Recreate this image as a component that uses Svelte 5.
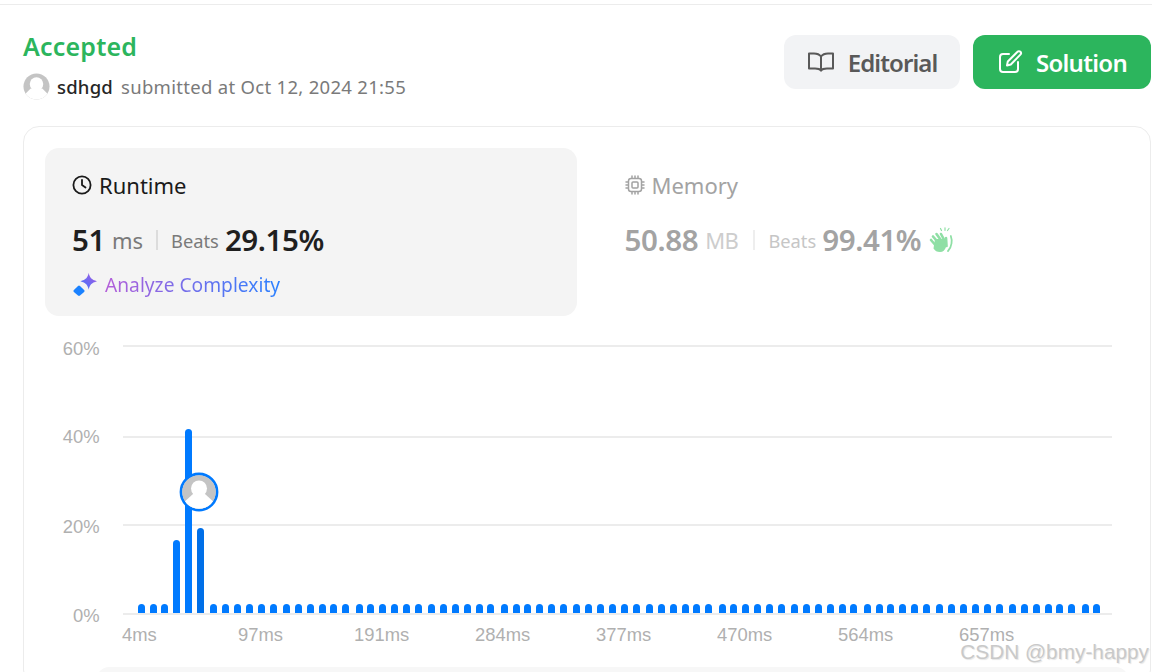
<script>
  const bars = Array.from({ length: 80 }, (_, i) => {
    const h = i === 3 ? 73 : i === 4 ? 184 : i === 5 ? 85 : 9;
    const x = 137.7 + 72.6 * Math.floor(i / 6) + 11.86 * (i % 6) - 45;
    return { x: x.toFixed(1), h, dark: i === 5 };
  });
  const grid = [
    { y: 346, ty: 355, label: '60%' },
    { y: 437, ty: 443, label: '40%' },
    { y: 525, ty: 533, label: '20%' },
    { y: 614, ty: 622, label: '0%' }
  ];
  const ticks = [
    { x: 122, label: '4ms' },
    { x: 238, label: '97ms' },
    { x: 354, label: '191ms' },
    { x: 475, label: '284ms' },
    { x: 596, label: '377ms' },
    { x: 717, label: '470ms' },
    { x: 838, label: '564ms' },
    { x: 959, label: '657ms' }
  ];
</script>

<div class="page">
  <header class="head">
    <div class="status">
      <h1>Accepted</h1>
      <div class="who">
        <svg class="avatar" viewBox="0 0 28 28" aria-hidden="true">
          <defs><clipPath id="av"><circle cx="14" cy="14" r="13.500" /></clipPath></defs>
          <circle cx="14" cy="14" r="13.500" fill="#c4c4c4" />
          <g clip-path="url(#av)" fill="#fff">
            <circle cx="14" cy="11.500" r="7" />
            <path d="M8 16h12l7 7v6H1v-6z" />
          </g>
        </svg>
        <span class="name">sdhgd</span>
        <span class="when">submitted at Oct 12, 2024 21:55</span>
      </div>
    </div>
    <div class="actions">
      <button class="btn gray">
        <svg viewBox="0 0 28 24" width="28" height="24" fill="none" stroke="currentColor" stroke-width="2" stroke-linejoin="round" stroke-linecap="round" aria-hidden="true">
          <path d="M14 6.500C12.500 4.500 10 3.500 7 3.500H2v15h6c3 0 5 .6 6 2 1-1.400 3-2 6-2h6v-15h-5c-3 0-5.500 1-7 3z" />
          <path d="M14 6.500v14" />
        </svg>
        Editorial
      </button>
      <button class="btn green">
        <svg viewBox="0 0 26 26" width="26" height="26" fill="none" stroke="currentColor" stroke-width="2" stroke-linejoin="round" stroke-linecap="round" aria-hidden="true">
          <path d="M12 5H6a3 3 0 0 0-3 3v12a3 3 0 0 0 3 3h12a3 3 0 0 0 3-3v-7" />
          <path d="M10 16.500l.8-4L20.500 2.800a2 2 0 0 1 2.900 0 2 2 0 0 1 0 2.800L13.800 15.500z" />
        </svg>
        Solution
      </button>
    </div>
  </header>

  <section class="card">
    <div class="stats">
      <div class="stat active">
        <div class="title">
          <svg viewBox="0 0 20 20" width="20" height="20" fill="none" stroke="#1a1a1a" stroke-width="1.800" stroke-linecap="round" stroke-linejoin="round" aria-hidden="true">
            <circle cx="10" cy="10" r="8.600" />
            <path d="M10 4.800V10l3.500 2.500" />
          </svg>
          Runtime
        </div>
        <div class="nums">
          <span class="big">51</span>
          <span class="unit">ms</span>
          <i class="sep"></i>
          <span class="beats">Beats</span>
          <span class="big">29.15%</span>
        </div>
        <div class="analyze">
          <svg viewBox="0 0 24 24" width="24" height="24" aria-hidden="true">
            <defs>
              <linearGradient id="sp" x1="0" y1="1" x2="1" y2="0">
                <stop offset="0" stop-color="#3f7bff" />
                <stop offset="1" stop-color="#a855e0" />
              </linearGradient>
            </defs>
            <path fill="url(#sp)" d="M15.700 .800c.9 4.800 2.700 6.800 8.300 8.500-5.600 1.700-7.400 3.700-8.300 8.500-.9-4.800-2.700-6.800-8.300-8.500 5.600-1.700 7.400-3.700 8.300-8.500z" />
            <path fill="#1b82ff" d="M6 13.500q.6 0 1 .4l4.100 4.100q.9 1 0 2l-4.100 3.600q-1 .8-2 0L.9 20q-.9-1 0-2l4.100-4.100q.4-.4 1-.4z" />
          </svg>
          <span class="grad">Analyze Complexity</span>
        </div>
      </div>
      <div class="stat faded">
        <div class="title">
          <svg viewBox="0 0 20 20" width="20" height="20" fill="none" stroke="#a3a3a3" stroke-width="1.500" stroke-linecap="round" aria-hidden="true">
            <rect x="3.500" y="3.500" width="13" height="13" rx="2.500" />
            <rect x="7" y="7" width="6" height="6" rx="1" />
            <path d="M7 1v2M10 1v2M13 1v2M7 17v2M10 17v2M13 17v2M1 7h2M1 10h2M1 13h2M17 7h2M17 10h2M17 13h2" />
          </svg>
          Memory
        </div>
        <div class="nums">
          <span class="big">50.88</span>
          <span class="unit">MB</span>
          <i class="sep"></i>
          <span class="beats">Beats</span>
          <span class="big">99.41%</span>
          <svg class="clap" viewBox="0 0 24 26" width="24" height="26" fill="none" stroke="#8fdfa5" stroke-linecap="round" aria-hidden="true">
            <path fill="#8fdfa5" stroke="none" d="M6 12h11v8c-1 3-3 5-6 5-3 0-5-1-6.500-3.500z" />
            <path stroke-width="2.600" d="M2 13l6 7M4 9.500l7 8M7.500 7l6.500 9M12 7l4 7.500" />
            <path stroke-width="2.600" d="M17 11l.5 8" />
            <path stroke-width="1.800" d="M21.800 9c1.500 4 1.300 11-2.800 15" />
            <path stroke-width="1.200" d="M11.500 1.500l1 2M16 .8v2.500M20 1.500l-1.500 2" />
          </svg>
        </div>
      </div>
    </div>

    <div class="chart">
      <svg viewBox="45 330 1085 320" width="1085" height="320" aria-label="Runtime distribution">
        {#each grid as g}
          <line x1="123" x2="1112" y1={g.y} y2={g.y} stroke="#ececec" stroke-width="2" />
          <text x="99.500" y={g.ty} text-anchor="end" class="axis">{g.label}</text>
        {/each}
        {#each ticks as t}
          <text x={t.x} y="641" class="axis">{t.label}</text>
        {/each}
      </svg>
      <div class="bars">
        {#each bars as b}
          <span class="bar" class:dark={b.dark} style="left:{b.x}px;height:{b.h}px"></span>
        {/each}
      </div>
      <div class="pin">
        <svg viewBox="0 0 40 40" width="40" height="40" aria-hidden="true">
          <defs><clipPath id="pc"><circle cx="20" cy="20" r="16.800" /></clipPath></defs>
          <circle cx="20" cy="20" r="18" fill="#fff" stroke="#007aff" stroke-width="2.800" />
          <circle cx="20" cy="20" r="16.800" fill="#c4c4c4" />
          <g clip-path="url(#pc)" fill="#fff">
            <circle cx="20" cy="16.500" r="8" />
            <path d="M14 22h12l11 10v8H3v-8z" />
          </g>
        </svg>
      </div>
    </div>
    <div class="below"></div>
  </section>

  <div class="mark">CSDN @bmy-happy</div>
</div>

<style>
  :global(body) {
    margin: 0;
    background: #fff;
    overflow: hidden;
  }
  .page {
    position: relative;
    width: 1152px;
    overflow: hidden;
    box-sizing: border-box;
    border-top: 1px solid #ececec;
    margin-top: 4px;
    height: 668px;
    font-family: "Noto Sans", "Open Sans", sans-serif;
    color: #1a1a1a;
  }
  .head {
    display: flex;
    justify-content: space-between;
    padding: 25px 1px 0 23px;
    height: 121px;
    box-sizing: border-box;
  }
  h1 {
    margin: 0;
    font-size: 25px;
    line-height: 32px;
    font-weight: 600;
    color: #2cb55d;
    letter-spacing: 0.2px;
  }
  .who {
    display: flex;
    align-items: center;
    margin-top: 10px;
    height: 28px;
    font-size: 18.500px;
  }
  .avatar {
    width: 27px;
    height: 27px;
    margin-right: 7px;
  }
  .name {
    font-weight: 500;
    color: #262626;
    margin-right: 8px;
    letter-spacing: 0.2px;
  }
  .when {
    color: #7a7a7a;
    letter-spacing: 0.3px;
  }
  .actions {
    display: flex;
    gap: 13px;
    margin-top: 5px;
  }
  .btn {
    display: flex;
    align-items: center;
    justify-content: center;
    height: 54px;
    border: 0;
    border-radius: 12px;
    font-family: inherit;
    font-size: 24px;
    font-weight: 600;
    letter-spacing: -0.7px;
    gap: 13px;
  }
  .gray {
    width: 176px;
    background: #f2f3f5;
    color: #595959;
    letter-spacing: -0.9px;
  }
  .green {
    width: 178px;
    background: #2cb55d;
    color: #fff;
  }
  .card {
    margin-left: 23px;
    width: 1128px;
    box-sizing: border-box;
    height: 560px;
    border: 1px solid #ececec;
    border-radius: 16px;
    padding: 21px 21px 0;
    position: relative;
  }
  .stats {
    display: flex;
    gap: 21px;
  }
  .stat {
    width: 532px;
    height: 168px;
    box-sizing: border-box;
    padding: 23px 27px 0;
    border-radius: 14px;
  }
  .active {
    background: #f4f4f4;
  }
  .faded {
    color: #a3a3a3;
  }
  .title {
    display: flex;
    align-items: center;
    gap: 7px;
    font-size: 22px;
    line-height: 28px;
  }
  .nums {
    display: flex;
    align-items: center;
    margin-top: 22px;
    height: 38px;
  }
  .big {
    font-size: 29.500px;
    font-weight: 600;
    letter-spacing: -0.4px;
    color: #1f1f1f;
    line-height: 38px;
  }
  .faded .big {
    color: #a3a3a3;
  }
  .unit {
    font-size: 22px;
    margin-left: 7px;
    color: #7a7a7a;
  }
  .faded .unit {
    color: #cdcdcd;
    letter-spacing: -0.500px;
  }
  .sep {
    width: 2px;
    height: 20px;
    background: #dcdcdc;
    margin: 0 13px;
  }
  .faded .sep {
    background: #eeeeee;
    margin-left: 15px;
  }
  .beats {
    font-size: 18.300px;
    color: #7a7a7a;
    margin-right: 6px;
  }
  .faded .beats {
    color: #c6c6c6;
  }
  .clap {
    margin-left: 8px;
  }
  .analyze {
    display: flex;
    align-items: center;
    gap: 8px;
    margin-top: 11px;
    margin-left: 1px;
    height: 28px;
  }
  .grad {
    font-size: 19.200px;
    background: linear-gradient(90deg, #b45ed8, #2a80ff);
    -webkit-background-clip: text;
    background-clip: text;
    color: transparent;
  }
  .chart {
    position: relative;
    margin: 14px 0 0 0;
    width: 1085px;
    height: 320px;
  }
  .chart svg {
    display: block;
  }
  .axis {
    font-family: "Liberation Sans", Arial, sans-serif;
    font-size: 18.400px;
    fill: #b0b0b0;
  }
  .bars {
    position: absolute;
    inset: 0;
  }
  .bar {
    position: absolute;
    bottom: 37px;
    width: 7px;
    background: #007aff;
    border-radius: 3.500px 3.500px 0 0;
  }
  .bar.dark {
    background: #006fe8;
  }
  .pin {
    position: absolute;
    left: 134px;
    top: 142px;
    width: 40px;
    height: 40px;
  }
  .below {
    position: absolute;
    left: 73px;
    right: 22px;
    top: 540px;
    height: 40px;
    border-radius: 12px;
    background: #f7f7f7;
  }
  .mark {
    position: absolute;
    right: 3px;
    bottom: 10px;
    line-height: 20px;
    font-family: "Liberation Sans", Arial, sans-serif;
    font-size: 20.800px;
    color: #c9c9c9;
    text-shadow: 1px 1px 1px rgba(0, 0, 0, 0.1);
  }
</style>
